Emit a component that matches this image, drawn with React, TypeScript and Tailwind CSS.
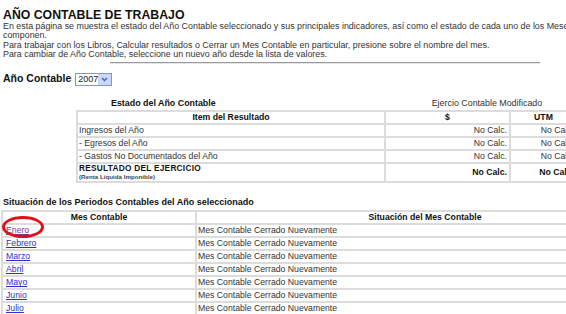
const font = { fontFamily: '"Liberation Sans", Arial, sans-serif' };

type Row = { label: string; usd: string; utm: string };

const resultRows: Row[] = [
  { label: 'Ingresos del Año', usd: 'No Calc.', utm: 'No Calc.' },
  { label: '- Egresos del Año', usd: 'No Calc.', utm: 'No Calc.' },
  { label: '- Gastos No Documentados del Año', usd: 'No Calc.', utm: 'No Calc.' },
];

const months = ['Enero', 'Febrero', 'Marzo', 'Abril', 'Mayo', 'Junio', 'Julio'];

function YearSelect() {
  return (
    <div className="flex h-[13px] w-[37px] items-stretch border border-[#7f9db9] bg-white">
      <span className="flex-1 pl-[2px] text-[9px] leading-[11px] text-[#222]">2007</span>
      <span className="flex w-[13px] items-center justify-center border border-[#c3d3fd] bg-[#c9d8fc]">
        <svg width="7" height="5" viewBox="0 0 7 5">
          <path d="M1 1 L3.5 3.5 L6 1" fill="none" stroke="#4d6185" strokeWidth="1.4" />
        </svg>
      </span>
    </div>
  );
}

export default function App() {
  return (
    <div className="h-[314px] w-[566px] overflow-hidden bg-white text-[#222]" style={font}>
      <div className="w-[660px] pl-[3px]">
        {/* HEADER */}
        <h1 className="pt-[8px] text-[12.3px] font-bold leading-[14px] text-[#111]">
          AÑO CONTABLE DE TRABAJO
        </h1>
        <div className="text-[8.9px] leading-[9.3px] text-[#333]">
          <p className="whitespace-nowrap">
            En esta página se muestra el estado del Año Contable seleccionado y sus principales
            indicadores, así como el estado de cada uno de los Meses que lo
          </p>
          <p>componen.</p>
          <p>
            Para trabajar con los Libros, Calcular resultados o Cerrar un Mes Contable en
            particular, presione sobre el nombre del mes.
          </p>
          <p>Para cambiar de Año Contable, seleccione un nuevo año desde la lista de valores.</p>
        </div>
        <div className="ml-[107px] mt-[3px] h-[2px] w-[430px] border-t border-[#9a9a9a] border-b-[#e5e5e5] border-b" />

        {/* AÑO */}
        <div className="mt-[7px] flex items-center gap-[4px]">
          <span className="text-[10.5px] font-bold text-[#111]">Año Contable</span>
          <YearSelect />
        </div>

        {/* ESTADO */}
        <div className="mt-[11px] flex h-[11px] items-center text-[8.9px] leading-[11px]">
          <span className="ml-[108px] font-bold text-[#111]">Estado del Año Contable</span>
          <span className="ml-[216px] text-[#333]">Ejercio Contable Modificado</span>
        </div>
        <table className="ml-[73px] mt-[1px] w-[502px] border-separate border-spacing-[2px] bg-[#dcdcdc] text-[8.7px] leading-[10px] text-[#333]">
          <thead>
            <tr className="h-[11px]">
              <th className="w-[306px] bg-white text-center font-bold text-[#111]">Item del Resultado</th>
              <th className="w-[123px] bg-white text-center font-bold text-[#111]">$</th>
              <th className="bg-white text-center font-bold text-[#111]">UTM</th>
            </tr>
          </thead>
          <tbody>
            {resultRows.map((r) => (
              <tr key={r.label} className="h-[11px]">
                <td className="bg-white pl-[1px]">{r.label}</td>
                <td className="bg-white pr-[2px] text-right">{r.usd}</td>
                <td className="bg-white pr-[2px] text-right">{r.utm}</td>
              </tr>
            ))}
            <tr className="h-[17px]">
              <td className="bg-white pl-[1px]">
                <div className="text-[8.3px] font-bold leading-[9px] tracking-[0.25px] text-[#111]">
                  RESULTADO DEL EJERCICIO
                </div>
                <div className="text-[6.2px] font-bold leading-[7px] text-[#444]">(Renta Líquida Imponible)</div>
              </td>
              <td className="bg-white pr-[2px] text-right font-bold text-[#111]">No Calc.</td>
              <td className="bg-white pr-[2px] text-right font-bold text-[#111]">No Calc.</td>
            </tr>
          </tbody>
        </table>

        {/* PERIODOS */}
        <h2 className="mt-[14px] text-[9px] font-bold leading-[11px] text-[#111]">
          Situación de los Periodos Contables del Año seleccionado
        </h2>
        <div className="relative -ml-[2px] mt-[2px]">
          <table className="w-[660px] border-separate border-spacing-[2px] bg-[#dcdcdc] text-[8.7px] leading-[10px] text-[#333]">
            <thead>
              <tr className="h-[11px]">
                <th className="w-[192px] bg-white text-center font-bold text-[#111]">Mes Contable</th>
                <th className="bg-white pr-[6px] text-center font-bold text-[#111]">Situación del Mes Contable</th>
              </tr>
            </thead>
            <tbody>
              {months.map((m, i) => (
                <tr key={m} className="h-[11px]">
                  <td className="bg-white pl-[3px]">
                    <a href="#" className={i === 0 ? 'text-[#7a3d9c] underline' : 'text-[#3030c8] underline'}>
                      {m}
                    </a>
                  </td>
                  <td className="bg-white pl-[1px]">Mes Contable Cerrado Nuevamente</td>
                </tr>
              ))}
            </tbody>
          </table>
          {/* red marker */}
          <div className="absolute left-[1px] top-[6px] h-[22px] w-[42px] rounded-[50%] border-[3px] border-[#e0101a]" />
        </div>
      </div>
    </div>
  );
}
